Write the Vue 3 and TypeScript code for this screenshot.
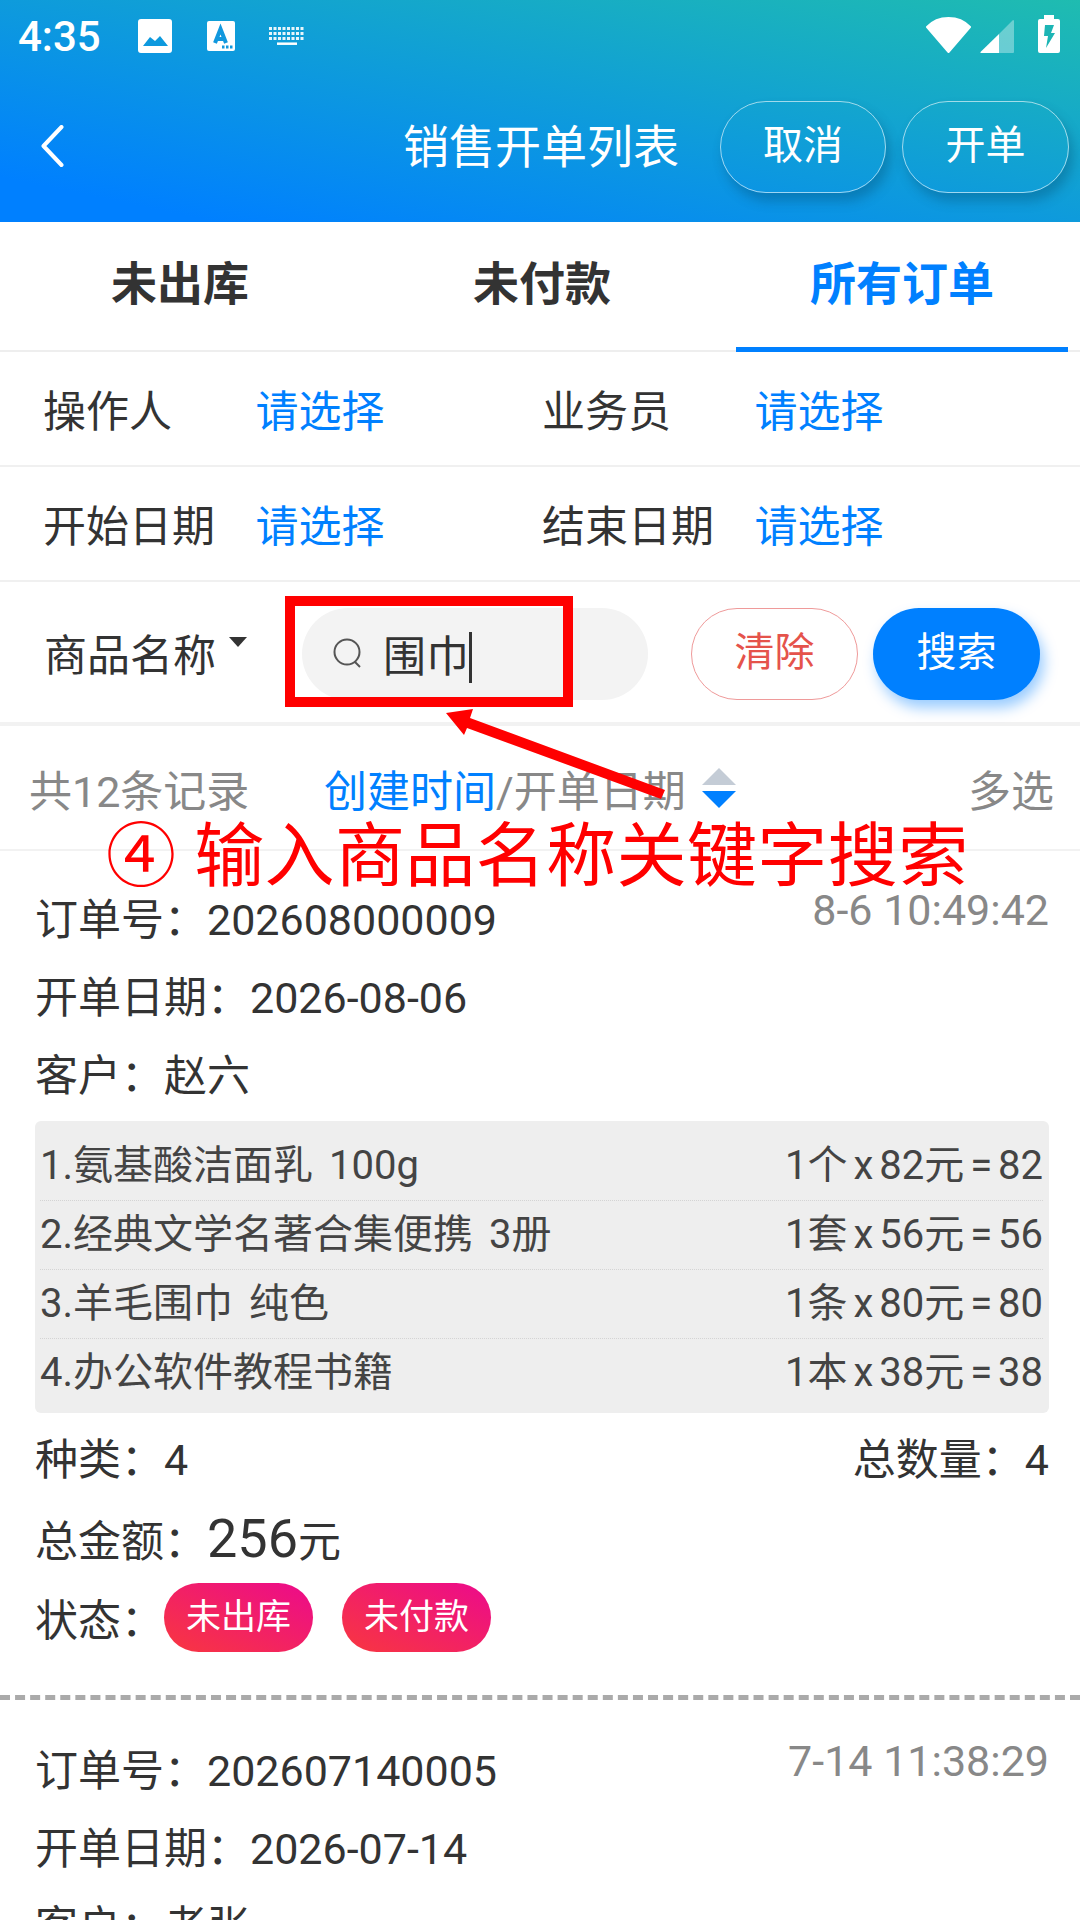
<script setup lang="ts">
interface LineItem {
  name: string;
  calc: string;
}
interface Order {
  no: string;
  date: string;
  customer: string;
  time: string;
}

const tabs = ["未出库", "未付款", "所有订单"];
const orders: Order[] = [
  { no: "202608000009", date: "2026-08-06", customer: "赵六", time: "8-6 10:49:42" },
  { no: "202607140005", date: "2026-07-14", customer: "老张", time: "7-14 11:38:29" },
];
const items: LineItem[] = [
  { name: "1.氨基酸洁面乳 100g", calc: "1个 x 82元 = 82" },
  { name: "2.经典文学名著合集便携 3册", calc: "1套 x 56元 = 56" },
  { name: "3.羊毛围巾 纯色", calc: "1条 x 80元 = 80" },
  { name: "4.办公软件教程书籍", calc: "1本 x 38元 = 38" },
];
</script>

<template>
  <div class="page">
    <header class="top">
      <div class="status">
        <span class="clock">4:35</span>
        <svg class="st-icon" width="34" height="34" viewBox="0 0 34 34">
          <path fill="#fff" fill-rule="evenodd" d="M3 0h28a3 3 0 0 1 3 3v28a3 3 0 0 1-3 3H3a3 3 0 0 1-3-3V3a3 3 0 0 1 3-3zM5 27h25l-8-10-5 5-5-4z" />
        </svg>
        <svg class="st-icon gap-a" width="28" height="30" viewBox="0 0 28 30">
          <path fill="#fff" d="M2 0h24a2 2 0 0 1 2 2v26a2 2 0 0 1-2 2H2a2 2 0 0 1-2-2V2a2 2 0 0 1 2-2z" />
          <path fill="none" stroke="#1198de" stroke-width="4" d="M8 22 13.500 8l5.500 14M10 18h7" />
          <path stroke="#1198de" stroke-width="3" stroke-dasharray="2.500 1.500" d="M15 26h11" />
        </svg>
        <svg class="st-icon gap-k" width="36" height="18" viewBox="0 0 36 18">
          <path stroke="#fff" stroke-width="3" stroke-dasharray="3 1.500" opacity=".9" d="M0 1.500h36M0 6.500h36M0 11.500h36" />
          <path stroke="#fff" stroke-width="2.500" d="M8 16.700h20" />
        </svg>
        <span class="status-gap"></span>
        <svg class="wifi" width="45" height="36" viewBox="0 0 45 36">
          <path fill="#fff" stroke="#fff" stroke-width="2" stroke-linejoin="round" d="M22.500 35 1 10C6.500 4 14 1 22.500 1S38.500 4 44 10z" />
        </svg>
        <svg class="sig" width="34" height="33" viewBox="0 0 34 33">
          <path fill="#fff" opacity=".35" d="M33 0q1 0 1 1v31q0 1-1 1H19V14z" />
          <path fill="#fff" d="M19 14v19H1q-1 0-.500-1z" />
        </svg>
        <svg class="bat" width="22" height="38" viewBox="0 0 22 38">
          <path fill="#fff" d="M6 0h10v4h4a2 2 0 0 1 2 2v30a2 2 0 0 1-2 2H2a2 2 0 0 1-2-2V6a2 2 0 0 1 2-2h4z" />
          <path fill="#1cb5b5" d="M7 10h9l-3 8h4l-9 15 2-12H6z" />
        </svg>
      </div>
      <div class="bar">
        <svg class="back" width="23" height="42" viewBox="0 0 23 42">
          <path fill="none" stroke="#fff" stroke-width="4" stroke-linecap="round" stroke-linejoin="round" d="M20.500 2 2.500 21l18 19" />
        </svg>
        <h1 class="title">销售开单列表</h1>
        <div class="bar-btns">
          <button class="ghost">取消</button>
          <button class="ghost">开单</button>
        </div>
      </div>
    </header>

    <nav class="tabs">
      <div v-for="(t, i) in tabs" :key="t" class="tab" :class="{ on: i === 2 }">{{ t }}</div>
    </nav>

    <div class="filter">
      <div class="cell"><span class="f-label">操作人</span><span class="pick">请选择</span></div>
      <div class="cell"><span class="f-label">业务员</span><span class="pick">请选择</span></div>
    </div>
    <div class="filter">
      <div class="cell"><span class="f-label">开始日期</span><span class="pick">请选择</span></div>
      <div class="cell"><span class="f-label">结束日期</span><span class="pick">请选择</span></div>
    </div>

    <div class="search-row">
      <div class="kind">商品名称<i class="caret"></i></div>
      <div class="search-box">
        <svg width="34" height="34" viewBox="0 0 34 34">
          <circle cx="16" cy="15" r="12.500" fill="none" stroke="#555" stroke-width="2" />
          <path stroke="#555" stroke-width="2" d="m24 25 5 5" />
        </svg>
        <span class="keyword">围巾</span><i class="cursor"></i>
      </div>
      <button class="clear">清除</button>
      <button class="go">搜索</button>
    </div>

    <div class="list-head">
      <span class="count">共12条记录</span>
      <span class="sort">
        <em>创建时间</em>/开单日期
        <span class="sort-arrows"><i class="up"></i><i class="down"></i></span>
      </span>
      <span class="multi">多选</span>
    </div>

    <article v-for="(o, idx) in orders" :key="o.no" class="order" :class="{ second: idx === 1 }">
      <div class="line split">
        <span>订单号：{{ o.no }}</span>
        <span class="time">{{ o.time }}</span>
      </div>
      <div class="line">开单日期：{{ o.date }}</div>
      <div class="line">客户：{{ o.customer }}</div>
      <template v-if="idx === 0">
        <div class="goods">
          <div v-for="it in items" :key="it.name" class="good">
            <span class="good-name">{{ it.name }}</span><span class="good-calc">{{ it.calc }}</span>
          </div>
        </div>
        <div class="line split"><span>种类：4</span><span>总数量：4</span></div>
        <div class="line total">总金额：<b class="sum">256</b>元</div>
        <div class="line state">状态：<span class="pill">未出库</span><span class="pill">未付款</span></div>
      </template>
    </article>

    <div class="mark-box"></div>
    <svg class="mark-arrow" width="224" height="94" viewBox="0 0 224 94">
      <path fill="#f00" d="M1 5 28 1 25 10 220 82 216 91 22 20 19 27z" />
    </svg>
    <div class="mark-text">④ 输入商品名称关键字搜索</div>
  </div>
</template>

<style>
html,
body {
  margin: 0;
  background: #fff;
}
</style>

<style scoped>
.page {
  position: relative;
  width: 1080px;
  height: 1920px;
  overflow: hidden;
  background: #fff;
  color: #333;
  font-family: Roboto, "Noto Sans CJK SC", sans-serif;
}
.top {
  height: 222px;
  background: linear-gradient(to top right, #0080ff 10%, #1fbcb0 100%);
  color: #fff;
}
.status {
  display: flex;
  align-items: center;
  height: 72px;
  padding: 0 20px 0 18px;
}
.clock {
  width: 120px;
  font-size: 42px;
  font-weight: 500;
}
.st-icon {
  flex: none;
}
.gap-a {
  margin-left: 35px;
}
.gap-k {
  margin-left: 34px;
}
.status-gap {
  flex: 1;
}
.wifi {
  margin-top: -2px;
}
.sig {
  margin-left: 9px;
}
.bat {
  margin-left: 24px;
  margin-top: -4px;
}
.bar {
  position: relative;
  display: flex;
  align-items: center;
  justify-content: flex-end;
  height: 92px;
  margin-top: 29px;
  padding-right: 11px;
}
.back {
  position: absolute;
  left: 41px;
  top: 24px;
}
.title {
  position: absolute;
  left: 403px;
  top: 16px;
  margin: 0;
  font-size: 46px;
  font-weight: 400;
  line-height: 60px;
}
.bar-btns {
  display: flex;
  gap: 16px;
}
.ghost {
  width: 167px;
  height: 92px;
  padding: 0 0 10px;
  border: 1px solid rgba(255, 255, 255, 0.6);
  border-radius: 46px;
  background: transparent;
  color: #fff;
  font: inherit;
  font-size: 40px;
  box-shadow: 4px 8px 12px rgba(0, 60, 90, 0.3);
}
.ghost:first-child {
  width: 166px;
}
.tabs {
  display: grid;
  grid-template-columns: repeat(3, 1fr);
  height: 130px;
  border-bottom: 2px solid #eee;
  box-sizing: border-box;
}
.tab {
  margin-bottom: -2px;
  text-align: center;
  font-size: 46px;
  font-weight: 700;
  line-height: 124px;
}
.tab:nth-child(2) {
  padding-left: 4px;
}
.tab.on {
  margin-left: 16px;
  margin-right: 12px;
  color: #0080ff;
  border-bottom: 5px solid #0080ff;
}
.filter {
  display: flex;
  height: 115px;
  padding: 0 0 2px 43px;
  align-items: center;
  border-bottom: 2px solid #f0f0f0;
  box-sizing: border-box;
  font-size: 43px;
}
.cell {
  display: flex;
  width: 499px;
}
.f-label {
  width: 212.500px;
  color: #333;
}
.pick {
  color: #0080ff;
}
.search-row {
  display: flex;
  align-items: center;
  height: 144px;
  padding: 4px 0 0 44px;
  box-sizing: border-box;
  border-bottom: 4px solid #f2f2f2;
}
.kind {
  position: relative;
  width: 258px;
  font-size: 43px;
  transform: translateY(-2px);
}
.caret {
  position: absolute;
  left: 185px;
  top: 16px;
  border: 9px solid transparent;
  border-top: 10px solid #333;
  border-bottom: 0;
}
.search-box {
  display: flex;
  align-items: center;
  width: 346px;
  height: 92px;
  padding-left: 29px;
  box-sizing: border-box;
  border-radius: 46px;
  background: #f3f3f3;
}
.keyword {
  margin: -3px 0 0 18px;
  font-size: 43px;
}
.cursor {
  width: 3px;
  height: 51px;
  margin-top: 6px;
  background: #333;
}
.clear,
.go {
  width: 167px;
  height: 92px;
  padding: 0 0 10px;
  border-radius: 46px;
  font: inherit;
  font-size: 40px;
}
.clear {
  margin-left: 43px;
  border: 1px solid #ef9a9a;
  background: #fff;
  color: #e5534b;
}
.go {
  margin-left: 15px;
  border: 0;
  background: #0080ff;
  color: #fff;
  box-shadow: 4px 8px 14px rgba(0, 128, 255, 0.4);
}
.list-head {
  display: flex;
  align-items: center;
  height: 125px;
  padding: 0 26px 0 29px;
  box-sizing: border-box;
  border-bottom: 2px solid #f2f2f2;
  font-size: 43px;
  color: #888;
}
.count {
  width: 295px;
}
.sort {
  display: flex;
  align-items: center;
}
.sort em {
  font-style: normal;
  color: #0080ff;
}
.sort-arrows {
  display: flex;
  flex-direction: column;
  gap: 6px;
  margin-left: 16px;
}
.up,
.down {
  border-left: 17px solid transparent;
  border-right: 17px solid transparent;
}
.up {
  border-bottom: 17px solid #c4ccd6;
}
.down {
  border-top: 17px solid #0080ff;
}
.multi {
  margin-left: auto;
}
.order {
  padding: 26px 31px 38px 35px;
  border-bottom: 5px dashed #aaa;
}
.order.second {
  padding-top: 28px;
  border-bottom: 0;
}
.line {
  display: flex;
  align-items: center;
  height: 78px;
  font-size: 43px;
  color: #333;
}
.line.split {
  justify-content: space-between;
}
.line.total {
  margin-top: 4px;
}
.line.state {
  height: 80px;
}
.time {
  align-self: flex-start;
  margin-top: 8px;
  color: #888;
  font-size: 43px;
}
.goods {
  padding: 11px 6px 5px 5px;
  margin: 10px 0 4px;
  border-radius: 6px;
  background: #eee;
  font-size: 40px;
  color: #444;
}
.good {
  display: flex;
  justify-content: space-between;
  align-items: center;
  height: 69px;
  padding-bottom: 9px;
  box-sizing: border-box;
  border-bottom: 1px dotted #d4d4d4;
}
.good:last-child {
  border-bottom: 0;
}
.good-name {
  word-spacing: 6px;
}
.good-calc {
  word-spacing: -4px;
}
.sum {
  font-size: 54px;
  font-weight: 400;
}
.pill {
  display: inline-block;
  height: 69px;
  padding: 0 22px;
  margin-right: 29px;
  border-radius: 35px;
  background: linear-gradient(to top right, #f8373f, #ec0a8c);
  color: #fff;
  font-size: 35px;
  line-height: 69px;
}
.mark-box {
  position: absolute;
  left: 285px;
  top: 596px;
  width: 288px;
  height: 111px;
  box-sizing: border-box;
  border: 10px solid #f00;
}
.mark-arrow {
  position: absolute;
  left: 445px;
  top: 708px;
}
.mark-text {
  position: absolute;
  left: 106px;
  top: 811px;
  color: #f00;
  font-size: 70px;
  letter-spacing: 0.4px;
  line-height: 92px;
  white-space: nowrap;
}
</style>
